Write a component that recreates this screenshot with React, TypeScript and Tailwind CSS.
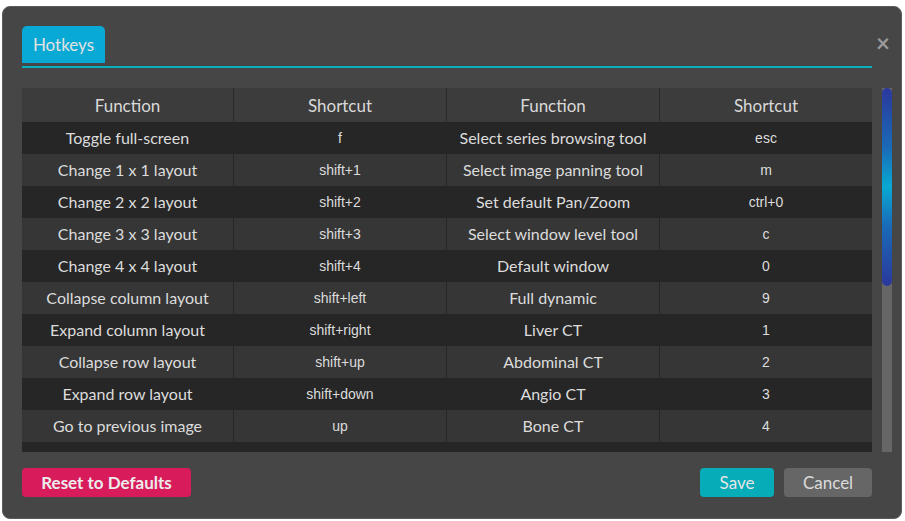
const rows: [string, string, string, string][] = [
  ["Toggle full-screen", "f", "Select series browsing tool", "esc"],
  ["Change 1 x 1 layout", "shift+1", "Select image panning tool", "m"],
  ["Change 2 x 2 layout", "shift+2", "Set default Pan/Zoom", "ctrl+0"],
  ["Change 3 x 3 layout", "shift+3", "Select window level tool", "c"],
  ["Change 4 x 4 layout", "shift+4", "Default window", "0"],
  ["Collapse column layout", "shift+left", "Full dynamic", "9"],
  ["Expand column layout", "shift+right", "Liver CT", "1"],
  ["Collapse row layout", "shift+up", "Abdominal CT", "2"],
  ["Expand row layout", "shift+down", "Angio CT", "3"],
  ["Go to previous image", "up", "Bone CT", "4"],
];

const fnFont = "font-['Lato','Open_Sans',sans-serif]";
const keyFont = "font-['Liberation_Sans',Arial,sans-serif]";
const cols = "grid grid-cols-[211px_213px_213px_213px]";

export default function App() {
  return (
    <div className="w-[905px] h-[521px] bg-white pt-[6px] pl-[2px]">
      <div
        className={`relative w-[900px] h-[513px] rounded-[8px] border border-[#5c5c5c] bg-[#464646] pt-[19px] pl-[19px] ${fnFont}`}
      >
        <button className="absolute right-[11px] top-[24px] text-[24px] font-bold leading-none text-[#9a9a9a]">
          ×
        </button>

        <div className="w-[850px]">
          <div className="flex h-[37px] w-[83px] items-center justify-center rounded-t-[5px] bg-[#09a9d6] text-[17px] text-[#e2e2e2]">
            Hotkeys
          </div>
          <div className="mt-[3px] h-[2px] bg-[#0aaebd]" />
        </div>

        <div className="mt-[20px] flex h-[364px] gap-[10px]">
          <div className="h-full w-[850px] overflow-hidden bg-[#262626]">
            <div className={`${cols} h-[34px] bg-[#3c3c3c] text-[17px] text-[#d9d9d9]`}>
              {["Function", "Shortcut", "Function", "Shortcut"].map((h, i) => (
                <div
                  key={i}
                  className={`flex items-center justify-center pt-[2px] ${i > 0 ? "border-l border-[#2a2a2a]" : ""}`}
                >
                  {h}
                </div>
              ))}
            </div>
            {rows.map((r, idx) => (
              <div
                key={idx}
                className={`${cols} h-[32px] text-[#dcdcdc] ${idx % 2 === 0 ? "bg-[#262626]" : "bg-[#363636]"}`}
              >
                {r.map((c, i) => (
                  <div
                    key={i}
                    className={`flex items-center justify-center ${i > 0 ? "border-l border-[#262626]" : ""} ${i % 2 === 0 ? `${fnFont} text-[16px]` : `${keyFont} text-[14px]`}`}
                  >
                    {c}
                  </div>
                ))}
              </div>
            ))}
          </div>
          <div className="h-full w-[10px] bg-[#666666]">
            <div className="h-[198px] w-full rounded-full bg-[linear-gradient(to_bottom,#2a389c,#1a6ab8_30%,#08a9d2_50%,#1a6ab8_70%,#2a389c)]" />
          </div>
        </div>

        <div className="mt-[16px] flex w-[850px] items-center">
          <button className="h-[29px] w-[169px] rounded-[4px] bg-[#d81b5b] text-[17px] font-bold text-[#ececec]">
            Reset to Defaults
          </button>
          <div className="flex-1" />
          <button className="h-[29px] w-[74px] rounded-[4px] bg-[#07acb9] text-[17px] text-[#e6e6e6]">
            Save
          </button>
          <button className="ml-[10px] h-[29px] w-[88px] rounded-[4px] bg-[#666666] text-[17px] text-[#dcdcdc]">
            Cancel
          </button>
        </div>
      </div>
    </div>
  );
}
